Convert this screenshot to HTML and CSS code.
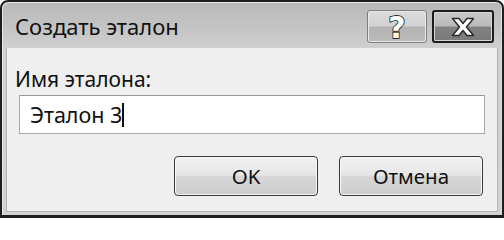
FILE: index.html
```html
<!DOCTYPE html>
<html lang="ru">
<head>
<meta charset="utf-8">
<title>Создать эталон</title>
<link rel="stylesheet" href="styles.css">
</head>
<body>
<div class="window">
  <div class="titlebar">
    <div class="title">Создать эталон</div>
    <div class="caption-buttons">
      <div class="cbtn help">
        <svg width="24" height="30" viewBox="0 0 24 30">
          <text x="12" y="25.5" text-anchor="middle" class="qmark">?</text>
        </svg>
      </div>
      <div class="cbtn close">
        <svg width="26" height="20" viewBox="0 0 26 20">
          <path d="M2.5 1.5 H9 L13 6.5 L17 1.5 H23.5 L16.5 10 L23.5 18.5 H17 L13 13.5 L9 18.5 H2.5 L9.5 10 Z" fill="#fff" stroke="#2a2a2a" stroke-width="1.5" stroke-linejoin="round"/>
        </svg>
      </div>
    </div>
  </div>
  <div class="client">
    <div class="label">Имя эталона:</div>
    <div class="input"><span class="value">Эталон 3</span><span class="caret"></span></div>
    <div class="buttons">
      <div class="btn">OK</div>
      <div class="btn">Отмена</div>
    </div>
  </div>
</div>
</body>
</html>
```

FILE: styles.css
```css
html, body {
  margin: 0;
  padding: 0;
  background: #ffffff;
}

.window {
  width: 504px;
  height: 218px;
  box-sizing: border-box;
  border: 2px solid #1e1e1e;
  border-bottom-width: 3px;
  border-radius: 8px 8px 0 0;
  background: linear-gradient(to bottom, #b9b9b9 0px, #c6c6c6 30px, #d0d0d0 46px, #d2d2d2 100%);
  box-shadow: inset 1px 1px 0 #e6e6e6, inset -1px 0 0 #e0e0e0;
  display: flex;
  flex-direction: column;
  font-family: "Noto Sans", "Open Sans", sans-serif;
  color: #111;
}

.titlebar {
  height: 46px;
  display: flex;
  align-items: flex-start;
  justify-content: space-between;
  padding: 0 8px 0 13px;
}

.title {
  font-size: 22px;
  line-height: 26px;
  margin-top: 11px;
  color: #111;
}

.caption-buttons {
  display: flex;
  gap: 5px;
  margin-top: 8px;
}

.cbtn {
  height: 33px;
  box-sizing: border-box;
  display: flex;
  align-items: center;
  justify-content: center;
  border-radius: 3px;
}

.cbtn svg {
  display: block;
  overflow: visible;
}

.help {
  width: 60px;
  border: 1px solid #7d7d7d;
  background: linear-gradient(to bottom, #dcdcdc 0%, #d2d2d2 48%, #b4b4b4 52%, #bcbcbc 100%);
  box-shadow: inset 0 0 0 1px #e8e8e8;
}

.qmark {
  font-family: "DejaVu Sans", sans-serif;
  font-weight: bold;
  font-size: 30px;
  fill: #ffffff;
  stroke: #2a2a2a;
  stroke-width: 1.8px;
  paint-order: stroke fill;
  stroke-linejoin: round;
}

.close {
  width: 62px;
  border: 2px solid #1c1c1c;
  background: linear-gradient(to bottom, #c8c8c8 0%, #bbbbbb 48%, #828282 52%, #7a7a7a 100%);
  box-shadow: inset 0 0 0 1px #d6d6d6;
}

.client {
  flex: 1;
  margin: 0 4px 3px 4px;
  background: #efefef;
  border: 1px solid #b4b4b4;
  border-top: none;
  display: flex;
  flex-direction: column;
  padding: 18px 14px 0 8px;
}

.label {
  font-size: 21px;
  line-height: 26px;
  color: #111;
}

.input {
  margin: 3px 0 0 4px;
  width: 466px;
  height: 39px;
  box-sizing: border-box;
  border: 1px solid #a9a9a9;
  border-top-color: #9a9a9a;
  background: #ffffff;
  display: flex;
  align-items: center;
  padding-left: 10px;
}

.value {
  font-size: 21.5px;
  line-height: 26px;
  color: #111;
}

.caret {
  width: 2px;
  height: 24px;
  background: #111;
}

.buttons {
  margin-top: 22px;
  display: flex;
  justify-content: flex-end;
  gap: 21px;
}

.btn {
  width: 144px;
  height: 40px;
  box-sizing: border-box;
  border: 1px solid #3a3a3a;
  border-radius: 4px;
  background: linear-gradient(to bottom, #f2f2f2 0%, #e6e6e6 48%, #d6d6d6 52%, #cdcdcd 100%);
  box-shadow: inset 0 0 0 1px #f8f8f8;
  display: flex;
  align-items: center;
  justify-content: center;
  font-size: 20.5px;
  color: #111;
}
```
